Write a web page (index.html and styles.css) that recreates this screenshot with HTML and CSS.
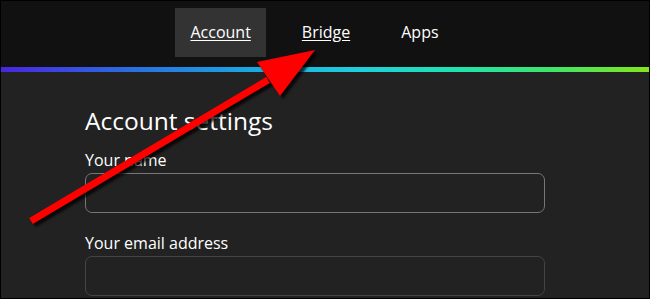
FILE: index.html
```html
<!DOCTYPE html>
<html lang="en">
<head>
    <meta charset="UTF-8" />
    <meta name="viewport" content="width=device-width, initial-scale=1.0"/>
    <title>Account settings</title>
    <link rel="stylesheet" href="styles.css">
</head>
<body>

    <div class="screen">
        <header class="topbar">
            <nav class="tabs">
                <a href="#" class="tab active">Account</a>
                <a href="#" class="tab">Bridge</a>
                <a href="#" class="tab plain">Apps</a>
            </nav>
        </header>
        <div class="spectrum"></div>

        <main class="settings">
            <h1>Account settings</h1>
            <label class="field">
                <span>Your name</span>
                <input type="text" class="box">
            </label>
            <label class="field">
                <span>Your email address</span>
                <input type="email" class="box faded">
            </label>
        </main>

        <!-- kırmızı ok, içeriğin üstünde -->
        <svg class="pointer" width="650" height="299" viewBox="0 0 650 299">
            <line x1="31" y1="221" x2="268" y2="80" stroke="#ff0000" stroke-width="7"/>
            <polygon points="315,50 257,62 280,96" fill="#ff0000"/>
        </svg>
    </div>

</body>
</html>
```

FILE: styles.css
```css
* {
    box-sizing: border-box;
}

body {
    margin: 0;
    background-color: #000;
    font-family: "Open Sans", "Noto Sans", sans-serif;
}

.screen {
    position: relative;
    width: 650px;
    height: 299px;
    border: 1px solid #000;
    background-color: #222;
    overflow: hidden;
}

.topbar {
    height: 66px;
    background-color: #111;
    padding-top: 7px;
}

.tabs {
    display: flex;
    justify-content: center;
    gap: 21px;
    padding-right: 21px;
}

.tab {
    display: block;
    height: 49px;
    line-height: 49px;
    padding: 0 15px;
    color: #fff;
    font-size: 16px;
    text-decoration: underline;
    text-underline-offset: 2px;
}

.tab.active {
    background-color: #333;
}

.tab.plain {
    text-decoration: none;
}

.spectrum {
    height: 5px;
    background: linear-gradient(to right, #4b25e2 0%, #2a6ee0 20%, #1aa6e2 38%, #1fcfdc 55%, #1fe3b2 70%, #3fe56a 85%, #84e61a 100%);
}

.settings {
    padding: 0 0 0 84px;
}

h1 {
    margin: 34px 0 0;
    font-size: 24.5px;
    font-weight: 400;
    line-height: 30px;
    color: #fff;
}

.field {
    display: block;
    width: 460px;
}

.field span {
    display: block;
    margin-top: 13px;
    font-size: 16px;
    line-height: 22px;
    color: #fff;
}

.box {
    display: block;
    width: 460px;
    height: 40px;
    margin-top: 2px;
    background-color: #222;
    border: 1px solid #777;
    border-radius: 7px;
    outline: none;
}

.box.faded {
    border-color: #444;
}

.field + .field span {
    margin-top: 19px;
}

.pointer {
    position: absolute;
    left: -1px;
    top: -1px;
    filter: drop-shadow(3px 3px 1px rgba(0, 0, 0, 0.75));
}
```
